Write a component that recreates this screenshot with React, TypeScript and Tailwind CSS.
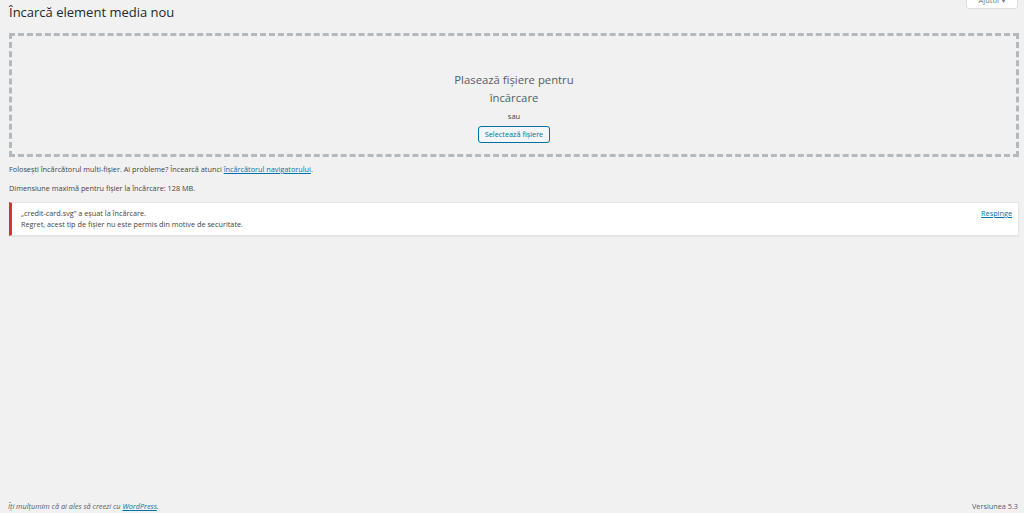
import React from 'react'

const FONT = { fontFamily: '"Open Sans", "Noto Sans", sans-serif' }

export default function App() {
  return (
    <div
      className="relative flex h-[513px] w-full flex-col overflow-hidden bg-[#f1f1f1] text-[#444]"
      style={FONT}
    >
      {/* help tab */}
      <div className="absolute right-[6px] top-[-8px] rounded-b-[3px] border border-[#ddd] bg-white px-[12px] pb-[1px] pt-[2px] text-[7.5px] leading-[11px] text-[#72777c]">
        Ajutor <span className="text-[6px]">▾</span>
      </div>

      <main className="flex-1 pl-[9px] pr-[5px]">
        <h1 className="pt-[2px] text-[13px] font-normal leading-[20px] text-[#23282d]">
          Încarcă element media nou
        </h1>

        <div className="mt-[11px] flex h-[124px] flex-col items-center justify-center border-[3px] border-dashed border-[#b4b9be] pt-[24px]">
          <p className="text-[11.3px] leading-[18px] text-[#555d66]">Plasează fișiere pentru</p>
          <p className="text-[11.3px] leading-[18px] text-[#555d66]">încărcare</p>
          <p className="mt-[2px] text-[7.5px] leading-[14px]">sau</p>
          <button className="mt-[3px] h-[17px] rounded-[3px] border border-[#0071a1] bg-[#f3f5f6] px-[6px] text-[7.3px] leading-[15px] text-[#0071a1]">
            Selectează fișiere
          </button>
        </div>

        <p className="mt-[6px] text-[7.3px] leading-[12px]">
          Folosești încărcătorul multi-fișier. Ai probleme? Încearcă atunci{' '}
          <a href="#" className="text-[#0073aa] underline">
            încărcătorul navigatorului
          </a>
          .
        </p>
        <p className="mt-[7px] text-[7.3px] leading-[12px]">
          Dimensiune maximă pentru fișier la încărcare: 128 MB.
        </p>

        <div className="mt-[8px] flex justify-between border border-l-[3px] border-[#e5e5e5] border-l-[#dc3232] bg-white py-[5px] pl-[9px] pr-[6px] shadow-[0_1px_1px_rgba(0,0,0,0.04)]">
          <div className="text-[7.3px] leading-[11px]">
            <p>„credit-card.svg” a eșuat la încărcare.</p>
            <p>Regret, acest tip de fișier nu este permis din motive de securitate.</p>
          </div>
          <a href="#" className="text-[7.3px] leading-[11px] text-[#0073aa] underline">
            Respinge
          </a>
        </div>
      </main>

      <footer className="flex items-center justify-between pb-[1px] pl-[8px] pr-[6px] text-[7.3px] leading-[12px] text-[#555d66]">
        <p className="italic">
          Îți mulțumim că ai ales să creezi cu{' '}
          <a href="#" className="text-[#0073aa] underline">
            WordPress
          </a>
          .
        </p>
        <p>Versiunea 5.3</p>
      </footer>
    </div>
  )
}
